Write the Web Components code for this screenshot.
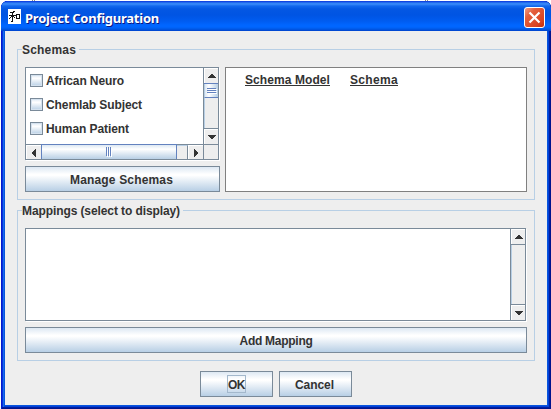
<!DOCTYPE html>
<html lang="en"><head><meta charset="utf-8"><title>Project Configuration</title>
<style>html,body{margin:0;width:551px;height:409px;overflow:hidden;background:#fff}</style></head><body>
<project-window></project-window>
<script>
const define=(name,html,init)=>{
  const t=document.createElement('template');
  t.innerHTML='<style>*{box-sizing:border-box}:host{box-sizing:border-box;display:block}</style>'+html;
  customElements.define(name,class extends HTMLElement{
    connectedCallback(){
      if(this.shadowRoot)return;
      this.attachShadow({mode:'open'}).append(t.content.cloneNode(true));
      if(init)init(this,this.shadowRoot);
    }
  });
};
// A single-line label whose tracking is adjusted to a given width.
define('ui-label',`<style>:host{display:inline-block;height:15px;line-height:17px;white-space:nowrap;flex:none}span{display:inline-block;margin-left:var(--nudge,0)}</style><span><slot></slot></span>`,(el,r)=>{
  const w=+el.getAttribute('w'),s=r.querySelector('span');
  if(w){el.style.width=w+'px';s.style.letterSpacing=(w-s.getBoundingClientRect().width)/el.textContent.length+'px';}
});
define('ui-button',`<style>:host{height:26px;border:1px solid #7a8a99;background:linear-gradient(#dde8f3 0,#fff 30%,#fff 35%,#b8cfe5 100%);display:flex;align-items:center;justify-content:center}
span{display:flex;align-items:center;height:18px;padding:1px 1px 0;border:1px solid transparent}:host([focused]) span{border-color:#a3b8cc;padding:1px 0 0}</style><span><slot></slot></span>`);
define('ui-check',`<style>:host{display:flex;align-items:center;height:24px;gap:4px;padding-top:1px}i{width:13px;height:13px;border:1px solid #7a8a99;background:linear-gradient(#dde8f3,#fff 30%,#b8cfe5);box-shadow:inset 0 0 0 1px #d5e2ef}</style><i></i><slot></slot>`);
define('ui-arrow',`<style>:host{background:#eee;border:1px solid #fff;border-right:0;border-bottom:0;display:flex;align-items:center;justify-content:center;flex:none;width:15px;height:15px}:host([dir=down]) svg{transform:rotate(180deg)}:host([dir=left]) svg{transform:rotate(-90deg)}:host([dir=right]) svg{transform:rotate(90deg)}</style><svg width="8" height="4" shape-rendering="crispEdges" fill="#333"><path d="M3 0h2v1h1v1h1v1h1v1H0V3h1V2h1V1h1z"/></svg>`);
define('ui-vbar',`<style>:host{display:flex;flex-direction:column;width:15px;border-left:1px solid #7a8a99;background:#eee}
.u{border-bottom:1px solid #7a8a99;height:16px}.d{border-top:1px solid #7a8a99;height:16px}.t{flex:1;border-left:1px solid #b8cfe5;display:flex;flex-direction:column}
ui-arrow{width:14px}.thumb{display:none}:host([thumb]) .thumb{display:flex;height:14px;margin-left:-1px;background:linear-gradient(90deg,#dde8f3,#fff 30%,#b8cfe5);border-bottom:1px solid #6382bf;border-left:1px solid #b8cfe5;align-items:center;justify-content:center}
:host([thumb]) .u{border-color:#6382bf}</style><div class="u"><ui-arrow></ui-arrow></div><div class="t"><div class="thumb"><svg width="10" height="6" shape-rendering="crispEdges"><path d="M0 .5h9M0 2.5h9M0 4.5h9" stroke="#6382bf"/><path d="M1 1.5h9M1 3.5h9M1 5.5h9" stroke="#fff"/></svg></div></div><div class="d"><ui-arrow dir="down"></ui-arrow></div>`);
define('ui-hbar',`<style>:host{display:flex;height:15px;border-top:1px solid #7a8a99;background:#eee}.thumb{width:136px;flex:none;margin-top:-1px;border:1px solid #6382bf;border-bottom:0;background:linear-gradient(#dde8f3,#fff 30%,#b8cfe5);display:flex;align-items:center;justify-content:center}.track{flex:1;border-top:1px solid #b8cfe5;border-right:1px solid #7a8a99}ui-arrow{height:14px}.end{width:15px;flex:none;border-left:1px solid #7a8a99}</style>
<ui-arrow dir="left"></ui-arrow><div class="thumb"><svg width="6" height="10" shape-rendering="crispEdges"><path d="M.5 0v9M2.5 0v9M4.5 0v9" stroke="#6382bf"/><path d="M1.5 1v9M3.5 1v9M5.5 1v9" stroke="#fff"/></svg></div><div class="track"></div><ui-arrow dir="right"></ui-arrow><div class="end"></div>`);
define('ui-group',`<style>:host{position:relative;width:518px;height:151px;border:1px solid #b8cfe5;padding:17px 7px 7px}.cap{position:absolute;left:4px;top:-8px;background:#eee;padding-right:2px;padding-left:1px;height:15px}</style><div class="cap"><slot name="caption"></slot></div><slot></slot>`);
define('project-window',`<style>
:host{width:551px;height:409px;padding:1px 0 0 1px;color:#333;font:bold 12px/15px "Liberation Sans",Arial,sans-serif;background:linear-gradient(90deg,#fff 0 32px,#888 32px 33px,#fff 33px 34px,#888 34px 35px,#fff 35px 425px,#888 425px 426px,#fff 426px 427px,#888 427px 428px,#fff 428px)}
.win{width:550px;height:408px;border-radius:7px 7px 0 0;background:#0831d9;overflow:hidden;display:flex;flex-direction:column;padding:0 4px 4px;box-shadow:inset 1px 0 #0019cf,inset -1px 0 #00138c,inset 0 -1px #00138c,inset -2px 0 #001ea0,inset 0 -2px #001ea0,inset 2px 0 #0831d9,inset 3px 0 #166aee,inset -3px -3px #0441d8,inset 4px 0 #0855dd,inset -4px -4px #0855dd}
header{flex:none;height:30px;margin:0 -4px;padding:0 6px 0 7px;background:linear-gradient(#0831d9 0,#2a7cf5 2px,#3c8cf8 3px,#1268ed 5px,#0457e3 8px,#0054e3 14px,#005cf0 20px,#0066ff 24px,#0066ff 26px,#005ae8 28px,#0042cc 30px);display:flex;align-items:center}
.logo{margin-top:1px;flex:none}header ui-label{color:#fff;font:bold 13px "Noto Sans","Open Sans",sans-serif;margin:4px auto 0 5px;text-shadow:1px 1px #0a1883;line-height:15px}
.close{margin-top:3px;flex:none}
.nudge{--nudge:-1px}
main{flex:1;background:#eee;padding:18px 12px 0}
.row{display:flex;gap:5px}.col{width:195px}
.list{width:194px;height:93px;border:1px solid #7a8a99;background:#fff;box-shadow:1px 1px #fff;display:flex;flex-direction:column}
.view{display:flex;height:76px}.items{flex:1;padding-left:4px}.list ui-hbar{flex:1}
.col ui-button{margin-top:6px}
.panel{width:302px;height:125px;background:#fff;border:1px solid #808080;padding:3px 0 0 19px;display:flex;gap:20px}
.panel ui-label{border-bottom:1px solid #333;line-height:19px}
ui-group+ui-group{margin-top:10px}
.maps{width:501px;height:93px;background:#fff;border:1px solid #7a8a99;box-shadow:1px 1px #fff;display:flex;justify-content:flex-end}.maps+ui-button{margin-top:6px;width:502px}
footer{display:flex;gap:6px;justify-content:center;margin-top:10px}footer ui-button{width:73px}
</style><div class="win"><header>
<svg class="logo" width="13" height="15" viewBox="0 0 13 15" shape-rendering="crispEdges"><path fill="#fff" d="M0 0h13v15H0z"/><path fill="#111" d="M5 2h2v1H5zM2 3h4v1H2zM4 4h1v9H4zM1 6h7v1H1zM3 7h1v1H3zM2 8h1v1H2zM1 9h1v1H1zM5 7h1v1H5zM6 8h1v1H6zM3 12h1v1H3zM8 5h4v1H8zM8 6h1v4H8zM11 6h1v3h-1zM9 9h3v1H9z"/></svg>
<ui-label class="nudge" w="134">Project Configuration</ui-label>
<svg class="close" width="21" height="21" viewBox="0 0 21 21"><defs><linearGradient id="g" x2="1" y2="1"><stop stop-color="#f2a38c"/><stop offset=".3" stop-color="#e4603d"/><stop offset=".75" stop-color="#db4422"/><stop offset="1" stop-color="#b92b0b"/></linearGradient></defs><rect x=".5" y=".5" width="20" height="20" rx="2.5" fill="url(#g)" stroke="#fff"/><path d="M5.5 5.5l10 10m0-10l-10 10" stroke="#fff" stroke-width="2.2"/></svg></header>
<main><ui-group><ui-label class="nudge" slot="caption" w="54">Schemas</ui-label><div class="row"><div class="col"><div class="list"><div class="view"><div class="items nudge">
<ui-check><ui-label w="78">African Neuro</ui-label></ui-check><ui-check><ui-label w="96">Chemlab Subject</ui-label></ui-check><ui-check><ui-label w="83">Human Patient</ui-label></ui-check>
</div><ui-vbar thumb></ui-vbar></div><ui-hbar></ui-hbar></div><ui-button class="nudge"><ui-label w="103">Manage Schemas</ui-label></ui-button></div>
<div class="panel"><ui-label w="85">Schema Model</ui-label><ui-label w="48">Schema</ui-label></div></div></ui-group>
<ui-group><ui-label class="nudge" slot="caption" w="158">Mappings (select to display)</ui-label><div class="maps"><ui-vbar></ui-vbar></div><ui-button><ui-label w="73">Add Mapping</ui-label></ui-button></ui-group>
<footer><ui-button focused><ui-label w="17">OK</ui-label></ui-button><ui-button class="nudge"><ui-label w="39">Cancel</ui-label></ui-button></footer></main></div>`);
</script></body></html>
